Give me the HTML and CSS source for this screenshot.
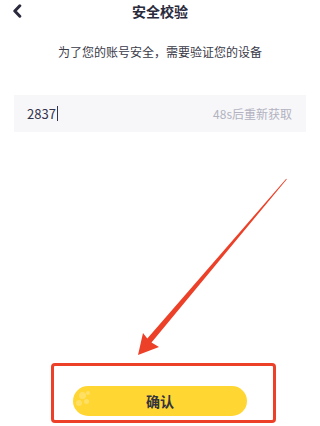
FILE: index.html
```html
<!DOCTYPE html>
<html lang="zh">
<head>
<meta charset="utf-8">
<link rel="stylesheet" href="styles.css">
</head>
<body>
<div class="page">
  <header class="nav">
    <svg class="back" width="10" height="14" viewBox="0 0 10 14"><path d="M7.8 1.8 L2.8 7 L7.8 12.2" fill="none" stroke="#2a2a3c" stroke-width="3" stroke-linecap="round" stroke-linejoin="round"/></svg>
    <div class="title">安全校验</div>
  </header>
  <p class="tip">为了您的账号安全，需要验证您的设备</p>
  <div class="field">
    <span class="code">2837<span class="caret"></span></span>
    <span class="resend">48s后重新获取</span>
  </div>
  <div class="spacer"></div>
  <div class="actions">
    <button class="confirm"><span class="dots"><i class="d1"></i><i class="d2"></i><i class="d3"></i><i class="d4"></i></span>确认</button>
  </div>
</div>
<div class="highlight"></div>
<svg class="arrow" width="320" height="426" viewBox="0 0 320 426">
  <polygon points="138,355 143,333 147.3,338.6 286.2,178.7 286.8,179.3 151.5,342.5 159,347" fill="#ec4128"/>
</svg>
</body>
</html>
```
FILE: styles.css
```css
html, body {
  margin: 0;
  padding: 0;
  background: #fff;
}
body {
  width: 320px;
  height: 426px;
  overflow: hidden;
  position: relative;
  font-family: "Noto Sans CJK SC", "Noto Sans", sans-serif;
}
.page {
  display: flex;
  flex-direction: column;
  height: 426px;
}
.nav {
  height: 22px;
  display: flex;
  align-items: center;
  justify-content: center;
  position: relative;
}
.back {
  position: absolute;
  left: 12px;
  top: 4px;
}
.title {
  font-size: 14px;
  font-weight: 700;
  color: #2a2a3c;
  line-height: 22px;
}
.tip {
  margin: 22px 0 0;
  text-align: center;
  font-size: 12px;
  line-height: 16px;
  color: #3a3a48;
}
.field {
  margin: 35px 14px 0;
  height: 37px;
  background: #f7f7f9;
  display: flex;
  align-items: center;
  justify-content: space-between;
  padding: 0 14px 0 13px;
}
.code {
  font-size: 13px;
  color: #33334a;
  display: flex;
  align-items: center;
}
.caret {
  display: inline-block;
  width: 1px;
  height: 15px;
  background: #33334a;
  margin-left: 1px;
}
.resend {
  font-size: 12px;
  color: #b2b2c0;
}
.spacer {
  flex: 1;
}
.actions {
  display: flex;
  justify-content: center;
  padding: 0 0 10px 0;
}
.confirm {
  position: relative;
  width: 174px;
  height: 30px;
  border: none;
  border-radius: 15px;
  background: #ffd632;
  font-family: "Noto Sans CJK SC", sans-serif;
  font-size: 14px;
  font-weight: 700;
  color: #333340;
  overflow: hidden;
  padding: 0;
}
.dots i {
  position: absolute;
  border-radius: 50%;
  background: rgba(255, 255, 255, 0.25);
}
.dots .d1 { left: 6px; top: 6px; width: 7px; height: 7px; }
.dots .d2 { left: 3px; top: 14px; width: 6px; height: 6px; }
.dots .d3 { left: 11px; top: 13px; width: 5px; height: 5px; }
.dots .d4 { left: 13px; top: 5px; width: 4px; height: 4px; }
.highlight {
  position: absolute;
  left: 51px;
  top: 363px;
  width: 219px;
  height: 54px;
  border: 3px solid #ec4128;
  border-radius: 4px;
}
.arrow {
  position: absolute;
  left: 0;
  top: 0;
  pointer-events: none;
}
```
